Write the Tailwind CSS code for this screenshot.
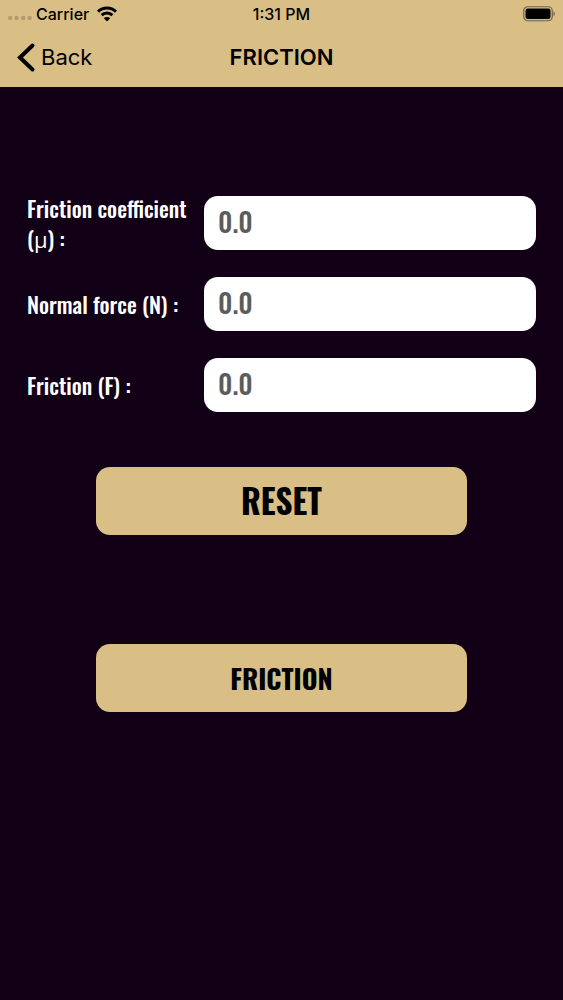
<!DOCTYPE html>
<html lang="en">
<head>
    <meta charset="UTF-8">
    <meta name="viewport" content="width=device-width, initial-scale=1.0">
    <title>Friction</title>
    <script src="https://cdn.jsdelivr.net/npm/@tailwindcss/browser@4"></script>
</head>
<body class="min-h-screen bg-[#120017] font-['Oswald','Liberation_Sans_Narrow','Roboto_Condensed','Liberation_Sans',sans-serif]">
    <header class="bg-[#d9bf86] text-black font-['Inter',sans-serif]">
        <!-- Status bar -->
        <div class="grid grid-cols-3 items-center h-7 px-2 text-base font-medium">
            <div class="flex items-center gap-1">
                <svg class="w-6 h-2 mt-2" viewBox="0 0 24 8" fill="#b29c6c" aria-hidden="true">
                    <circle cx="2.2" cy="4" r="2.2"/><circle cx="8.6" cy="4" r="2.2"/><circle cx="15.2" cy="4" r="2.2"/><circle cx="21.6" cy="4" r="2.2"/>
                </svg>
                <span>Carrier</span>
                <svg class="w-5 h-4 ml-1" viewBox="0 0 20 16" fill="none" stroke="#000" stroke-width="3" aria-hidden="true">
                    <path d="M1 5.6a13 13 0 0 1 18 0"/>
                    <path d="M4.6 9.2a7.8 7.8 0 0 1 10.8 0"/>
                    <path d="M10 15.4L6.8 12.2a4.6 4.6 0 0 1 6.4 0z" fill="#000" stroke="none"/>
                </svg>
            </div>
            <span class="text-center">1:31 PM</span>
            <svg class="justify-self-end w-8 h-4" viewBox="0 0 32 16" aria-hidden="true">
                <rect x="0.75" y="0.75" width="28.5" height="14" rx="4" fill="none" stroke="#6f6244" stroke-width="1.2"/>
                <rect x="2.5" y="2.5" width="25" height="10.5" rx="2.2" fill="#000"/>
                <path d="M30.5 5.2c1.8.8 1.8 4.2 0 5z" fill="#6f6244"/>
            </svg>
        </div>
        <!-- Navigation bar -->
        <nav class="grid grid-cols-3 items-center h-[59px] px-4 text-[22px]">
            <a href="#" class="flex items-center gap-[5px]">
                <svg class="w-5 h-8" viewBox="0 0 20 32" fill="none" stroke="#000" stroke-width="4" stroke-linecap="round" aria-hidden="true">
                    <path d="M16.5 3.5L4 15.5L16.5 27.5"/>
                </svg>
                Back
            </a>
            <h1 class="text-center font-semibold">FRICTION</h1>
        </nav>
    </header>
    <main class="px-[27px] pt-[106px]">
        <form>
            <div class="flex flex-col gap-[21px]">
                <div class="flex items-center min-h-15">
                    <label for="coefficient" class="w-[177px] shrink-0 text-[22px] leading-[30px] font-medium text-white">Friction coefficient (<span class="font-['Open_Sans',sans-serif] font-normal leading-none">μ</span>) :</label>
                    <input type="text" id="coefficient" placeholder="0.0" class="min-w-0 flex-1 h-[54px] px-[14px] pb-1 rounded-[14px] bg-white text-[27px] font-medium text-black placeholder:text-[#5c5c5c]">
                </div>
                <div class="flex items-center min-h-15">
                    <label for="normalForce" class="w-[177px] shrink-0 text-[22px] leading-[30px] font-medium text-white">Normal force (N) :</label>
                    <input type="text" id="normalForce" placeholder="0.0" class="min-w-0 flex-1 h-[54px] px-[14px] pb-1 rounded-[14px] bg-white text-[27px] font-medium text-black placeholder:text-[#5c5c5c]">
                </div>
                <div class="flex items-center min-h-15">
                    <label for="friction" class="w-[177px] shrink-0 text-[22px] leading-[30px] font-medium text-white">Friction (F) :</label>
                    <input type="text" id="friction" placeholder="0.0" class="min-w-0 flex-1 h-[54px] px-[14px] pb-1 rounded-[14px] bg-white text-[27px] font-medium text-black placeholder:text-[#5c5c5c]">
                </div>
            </div>
            <div class="flex flex-col items-center gap-[109px] mt-[52px]">
                <button type="reset" class="w-[73%] h-17 rounded-[14px] bg-[#d9bf86] text-[33px] font-bold text-black">RESET</button>
                <button type="submit" class="w-[73%] h-17 rounded-[14px] bg-[#d9bf86] text-[27px] font-bold text-black">FRICTION</button>
            </div>
        </form>
    </main>
</body>
</html>
